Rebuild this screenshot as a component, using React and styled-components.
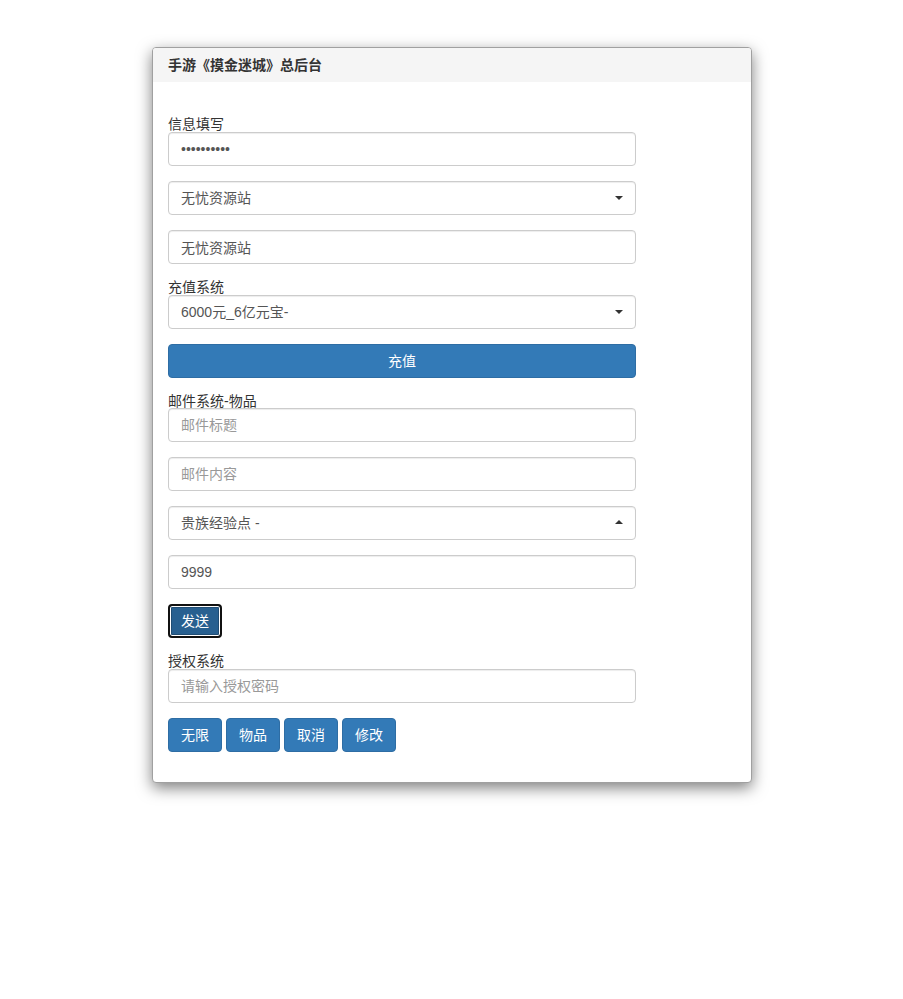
import React from "react";
import styled, { createGlobalStyle } from "styled-components";

const Global = createGlobalStyle`
  html, body { margin: 0; padding: 0; background: #fff; }
  body {
    font-family: "Liberation Sans", "Noto Sans CJK SC", sans-serif;
    font-size: 14px;
    color: #333;
  }
  * { box-sizing: border-box; }
`;

const Page = styled.div`
  display: flex;
  justify-content: center;
  padding-top: 47px;
  padding-left: 1px;
  min-height: 999px;
`;

const Panel = styled.div`
  width: 600px;
  background: #fff;
  border: 1px solid #a0a0a0;
  border-radius: 4px;
  box-shadow: 0 5px 15px rgba(0, 0, 0, 0.5);
  align-self: flex-start;
`;

const PanelHeader = styled.div`
  background: #f5f5f5;
  padding: 10px 15px;
  line-height: 14px;
  font-size: 14px;
  font-weight: bold;
  color: #333;
  border-radius: 3px 3px 0 0;
`;

const PanelBody = styled.div`
  padding: 34px 15px 15px;
`;

const Form = styled.form`
  width: 468px;
  display: flex;
  flex-direction: column;
`;

const Group = styled.div`
  margin-bottom: 15px;
`;

const Label = styled.label`
  display: block;
  font-size: 14px;
  line-height: 16px;
  height: ${(p) => p.$h || 16}px;
  color: #333;
`;

const controlCss = `
  display: block;
  width: 100%;
  height: 34px;
  padding: 6px 12px;
  font-family: "Liberation Sans", "Noto Sans CJK SC", sans-serif;
  font-size: 14px;
  line-height: 20px;
  color: #555;
  background: #fff;
  border: 1px solid #ccc;
  border-radius: 4px;
  box-shadow: inset 0 1px 1px rgba(0, 0, 0, 0.075);
  outline: none;
`;

const Input = styled.input`
  ${controlCss}
  &::placeholder { color: #999; }
`;

const SelectWrap = styled.div`
  position: relative;
`;

const Select = styled.select`
  ${controlCss}
  appearance: none;
  -webkit-appearance: none;
  padding-right: 30px;
`;

const Caret = styled.span`
  position: absolute;
  right: 13px;
  top: 15px;
  width: 0;
  height: 0;
  border-left: 4px solid transparent;
  border-right: 4px solid transparent;
  ${(p) =>
    p.$up
      ? "border-bottom: 4px solid #333; top: 14px;"
      : "border-top: 4px solid #333;"}
  pointer-events: none;
`;

const Button = styled.button`
  display: inline-block;
  height: 34px;
  padding: 6px 12px;
  font-family: "Liberation Sans", "Noto Sans CJK SC", sans-serif;
  font-size: 14px;
  line-height: 20px;
  color: #fff;
  background: #337ab7;
  border: 1px solid #2e6da4;
  border-radius: 4px;
  cursor: pointer;
  white-space: nowrap;
  ${(p) => (p.$block ? "width: 100%;" : "")}
  ${(p) =>
    p.$focused
      ? `background: #286090;
         border: 2px solid #111;
         padding: 5px 11px;
         box-shadow: inset 0 0 0 1px #fff, inset 0 0 0 2px #204d74;`
      : ""}
`;

const ButtonRow = styled.div`
  display: flex;
  gap: 4px;
`;

function Field({ label, labelHeight, children }) {
  return (
    <Group>
      {label && <Label $h={labelHeight}>{label}</Label>}
      {children}
    </Group>
  );
}

function SelectField({ label, value, up }) {
  return (
    <Field label={label}>
      <SelectWrap>
        <Select defaultValue={value}>
          <option value={value}>{value}</option>
        </Select>
        <Caret $up={up} />
      </SelectWrap>
    </Field>
  );
}

export default function App() {
  return (
    <>
      <Global />
      <Page>
        <Panel>
          <PanelHeader>手游《摸金迷城》总后台</PanelHeader>
          <PanelBody>
            <Form onSubmit={(e) => e.preventDefault()}>
              <Field label="信息填写">
                <Input type="password" defaultValue="1234567890" readOnly />
              </Field>
              <SelectField value="无忧资源站" />
              <Field>
                <Input type="text" defaultValue="无忧资源站" readOnly />
              </Field>
              <SelectField label="充值系统" value="6000元_6亿元宝-" />
              <Field>
                <Button type="button" $block>充值</Button>
              </Field>
              <Field label="邮件系统-物品" labelHeight={15}>
                <Input type="text" placeholder="邮件标题" />
              </Field>
              <Field>
                <Input type="text" placeholder="邮件内容" />
              </Field>
              <SelectField value="贵族经验点 -" up />
              <Field>
                <Input type="text" defaultValue="9999" readOnly />
              </Field>
              <Field>
                <Button type="button" $focused>发送</Button>
              </Field>
              <Field label="授权系统">
                <Input type="text" placeholder="请输入授权密码" />
              </Field>
              <Field>
                <ButtonRow>
                  <Button type="button">无限</Button>
                  <Button type="button">物品</Button>
                  <Button type="button">取消</Button>
                  <Button type="button">修改</Button>
                </ButtonRow>
              </Field>
            </Form>
          </PanelBody>
        </Panel>
      </Page>
    </>
  );
}
